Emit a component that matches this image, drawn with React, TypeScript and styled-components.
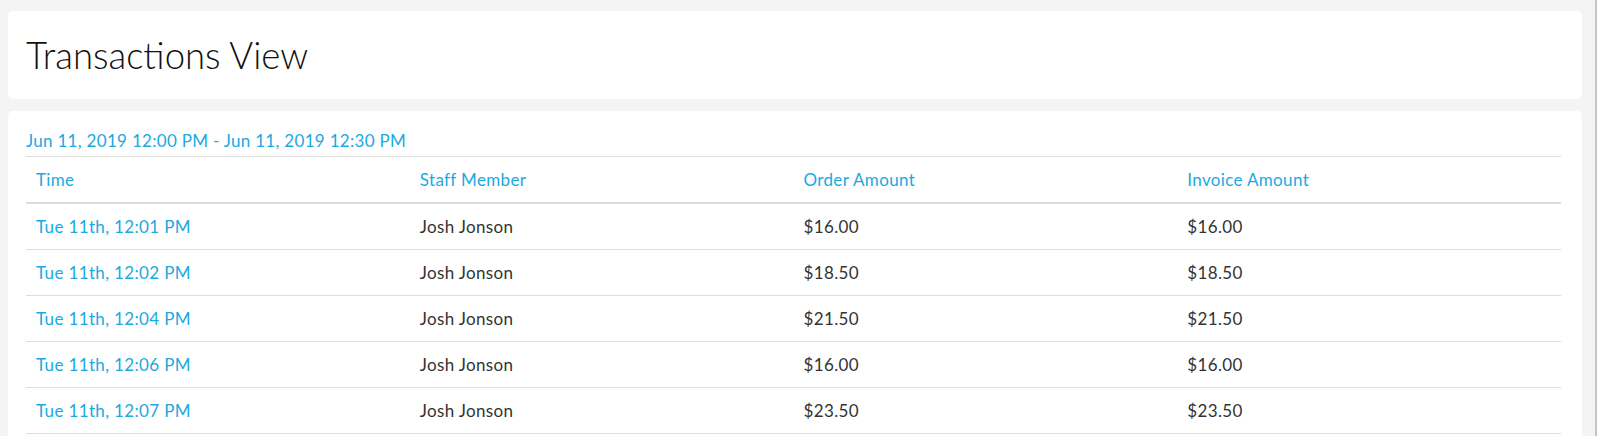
import React from "react";
import styled, { createGlobalStyle } from "styled-components";

const GlobalStyle = createGlobalStyle`
  html, body {
    margin: 0;
    padding: 0;
    background: #f4f4f4;
    font-family: Lato, "Open Sans", Arial, sans-serif;
    overflow: hidden;
  }
`;

const Shell = styled.div`
  display: flex;
  min-height: 436px;
`;

const Main = styled.div`
  flex: 1;
  display: flex;
  flex-direction: column;
  gap: 12px;
  padding: 11px 13px 0 8px;
`;

const ScrollEdge = styled.div`
  width: 2px;
  background: #c4c4c4;
`;

const Card = styled.section<{ $pad: string }>`
  background: #ffffff;
  border-radius: 5px;
  padding: ${(p) => p.$pad};
`;

const Title = styled.h1`
  margin: 0;
  font-weight: 300;
  font-size: 36.5px;
  line-height: 88px;
  color: #111;
`;

const DateRange = styled.div`
  font-size: 17px;
  letter-spacing: 0.3px;
  line-height: 22px;
  color: #1ba9e1;
  margin-bottom: 4px;
`;

const Table = styled.table`
  width: 100%;
  border-collapse: collapse;
  table-layout: fixed;
  border-top: 1px solid #dddddd;
`;

const HeadCell = styled.th`
  text-align: left;
  font-weight: 400;
  font-size: 17px;
  letter-spacing: 0.35px;
  color: #1ba9e1;
  height: 45px;
  padding: 0 10px;
  vertical-align: middle;
  border-bottom: 2px solid #dddddd;
`;

const Cell = styled.td<{ $accent?: boolean }>`
  font-size: 17px;
  letter-spacing: 0.35px;
  height: 45px;
  padding: 0 10px;
  vertical-align: middle;
  color: ${(p) => (p.$accent ? "#1ba9e1" : "#333333")};
  border-bottom: 1px solid #dddddd;
`;

const rows = [
  { time: "Tue 11th, 12:01 PM", staff: "Josh Jonson", order: "$16.00", invoice: "$16.00" },
  { time: "Tue 11th, 12:02 PM", staff: "Josh Jonson", order: "$18.50", invoice: "$18.50" },
  { time: "Tue 11th, 12:04 PM", staff: "Josh Jonson", order: "$21.50", invoice: "$21.50" },
  { time: "Tue 11th, 12:06 PM", staff: "Josh Jonson", order: "$16.00", invoice: "$16.00" },
  { time: "Tue 11th, 12:07 PM", staff: "Josh Jonson", order: "$23.50", invoice: "$23.50" },
];

export default function App() {
  return (
    <>
      <GlobalStyle />
      <Shell>
        <Main>
          <Card $pad="0 18px">
            <Title>Transactions View</Title>
          </Card>
          <Card $pad="19px 21px 20px 18px">
            <DateRange>Jun 11, 2019 12:00 PM - Jun 11, 2019 12:30 PM</DateRange>
            <Table>
              <thead>
                <tr>
                  <HeadCell>Time</HeadCell>
                  <HeadCell>Staff Member</HeadCell>
                  <HeadCell>Order Amount</HeadCell>
                  <HeadCell>Invoice Amount</HeadCell>
                </tr>
              </thead>
              <tbody>
                {rows.map((r, i) => (
                  <tr key={i}>
                    <Cell $accent>{r.time}</Cell>
                    <Cell>{r.staff}</Cell>
                    <Cell>{r.order}</Cell>
                    <Cell>{r.invoice}</Cell>
                  </tr>
                ))}
              </tbody>
            </Table>
          </Card>
        </Main>
        <ScrollEdge />
      </Shell>
    </>
  );
}
